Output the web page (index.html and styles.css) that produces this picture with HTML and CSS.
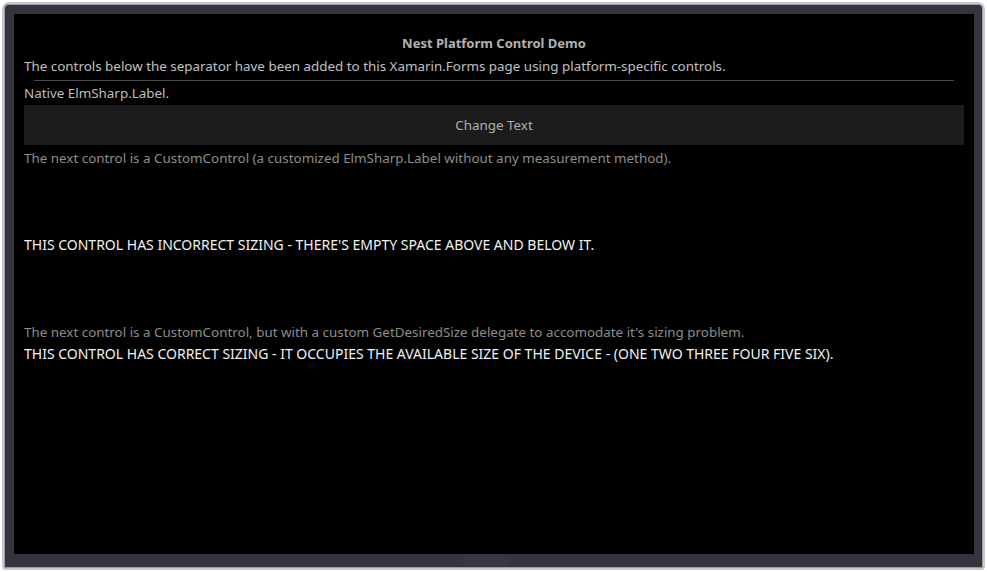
FILE: index.html
```html
<!DOCTYPE html>
<html>
<head>
<meta charset="utf-8">
<link rel="stylesheet" href="styles.css">
</head>
<body>
<div class="device">
  <div class="screen">
    <div class="title">Nest Platform Control Demo</div>
    <div class="row intro">The controls below the separator have been added to this Xamarin.Forms page using platform-specific controls.</div>
    <div class="separator"></div>
    <div class="row native">Native ElmSharp.Label.</div>
    <div class="button">Change Text</div>
    <div class="row note">The next control is a CustomControl (a customized ElmSharp.Label without any measurement method).</div>
    <div class="bigcontrol">THIS CONTROL HAS INCORRECT SIZING - THERE'S EMPTY SPACE ABOVE AND BELOW IT.</div>
    <div class="row note note2">The next control is a CustomControl, but with a custom GetDesiredSize delegate to accomodate it's sizing problem.</div>
    <div class="row caps">THIS CONTROL HAS CORRECT SIZING - IT OCCUPIES THE AVAILABLE SIZE OF THE DEVICE - (ONE TWO THREE FOUR FIVE SIX).</div>
  </div>
  <div class="homekey"></div>
</div>
</body>
</html>
```

FILE: styles.css
```css
html, body {
  margin: 0;
  padding: 0;
  background: #ffffff;
}
body {
  width: 987px;
  height: 572px;
  overflow: hidden;
  font-family: "Noto Sans", "Open Sans", sans-serif;
  font-size: 13.4px;
}
.device {
  position: relative;
  margin: 2px 0 0 2px;
  width: 959px;
  height: 540px;
  padding: 10px 10px 14px 10px;
  background: #32353e;
  border: 2px solid #c8c8c8;
  border-radius: 7px 7px 4px 4px;
  box-shadow: inset 0 0 0 1px #9a9ca1;
}
.screen {
  width: 950px;
  height: 540px;
  padding-left: 10px;
  background: #000000;
  display: flex;
  flex-direction: column;
}
.title {
  height: 24px;
  margin-top: 17px;
  line-height: 24px;
  text-align: center;
  font-weight: bold;
  font-size: 13px;
  color: #b2b2b2;
  padding-right: 10px;
}
.row {
  height: 22px;
  line-height: 22px;
  white-space: nowrap;
}
.intro {
  color: #c0c0c0;
}
.separator {
  height: 1px;
  margin: 3px 20px 1px 10px;
  background: #4a4a4a;
}
.native {
  color: #bdbdbd;
}
.button {
  margin-top: 1px;
  width: 940px;
  height: 40px;
  line-height: 40px;
  text-align: center;
  background: #1c1c1c;
  color: #b0b0b0;
}
.note {
  color: #8d8d8d;
  margin-top: 2px;
}
.note2 {
  margin-top: 3px;
}
.bigcontrol {
  height: 148px;
  margin-top: 1px;
  display: flex;
  align-items: center;
  color: #f2f2f2;
  font-size: 14px;
  white-space: nowrap;
}
.caps {
  color: #f2f2f2;
  font-size: 14px;
}
.homekey {
  position: absolute;
  left: 459px;
  top: 552px;
  width: 47px;
  height: 10px;
  background: #363942;
}
```
